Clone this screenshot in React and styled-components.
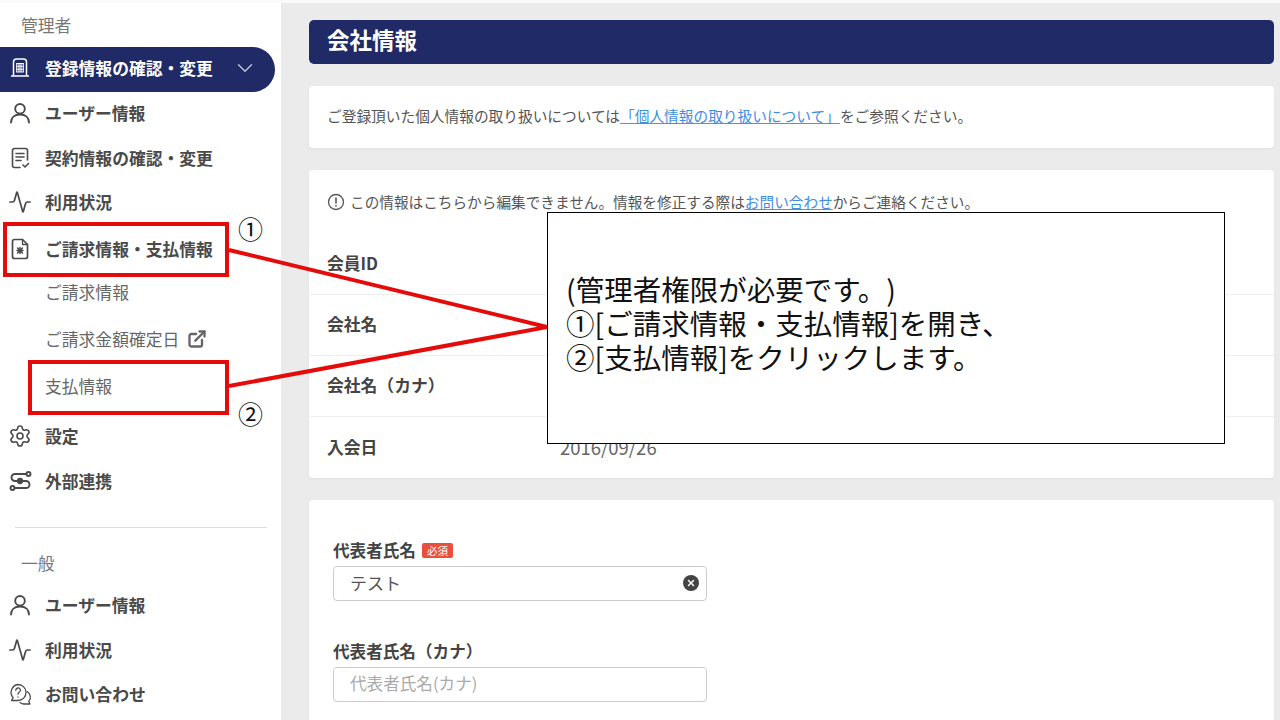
import React from 'react';
import styled, { createGlobalStyle } from 'styled-components';
import { Activity, Settings, ExternalLink, ChevronDown, X } from 'lucide-react';

const GlobalStyle = createGlobalStyle`
	html, body {
		margin: 0;
		height: 100%;
		overflow: hidden;
	}
	body {
		background: #ebebeb;
		font-family: "Noto Sans CJK JP", "Noto Sans", sans-serif;
		color: #444;
	}
`;

const Page = styled.div`
	position: relative;
	width: 1280px;
	height: 720px;
	overflow: hidden;
	display: flex;
	background: #ebebeb;
	border-top: 3px solid #fafafa;
	box-sizing: border-box;
`;

const Sidebar = styled.nav`
	width: 281px;
	flex: none;
	background: #fff;
	display: flex;
	flex-direction: column;
`;

const SectionTitle = styled.div`
	height: ${p => p.$height}px;
	flex: none;
	box-sizing: border-box;
	padding: ${p => p.$top || 0}px 0 0 21px;
	display: flex;
	align-items: center;
	font-size: 16.8px;
	color: #777;
`;

const NavItem = styled.div`
	height: 44.5px;
	flex: none;
	box-sizing: border-box;
	display: flex;
	align-items: center;
	gap: 13px;
	padding: 0 0 2px 8px;
	margin-top: ${p => p.$top || 0}px;
	font-size: 16.8px;
	font-weight: 700;
	color: #4a4a4a;
	white-space: nowrap;

	& svg {
		flex: none;
	}
`;

const ActiveItem = styled(NavItem)`
	height: 45px;
	margin-right: 6px;
	padding: 0 17px 3px 8px;
	background: #1f2a66;
	border-radius: 0 23px 23px 0;
	color: #fff;

	& .chevron {
		margin-left: auto;
		color: #c8cbdc;
	}
`;

const SubItem = styled.div`
	height: 47px;
	flex: none;
	box-sizing: border-box;
	display: flex;
	align-items: center;
	gap: 8px;
	padding: 0 0 3px 45px;
	font-size: 16.8px;
	color: #666;
	margin-top: ${p => p.$top || 0}px;
`;

const SideDivider = styled.hr`
	flex: none;
	width: 252px;
	margin: 23px 0 0 15px;
	border: 0;
	border-top: 1px solid #ddd;
`;

const Main = styled.main`
	flex: 1;
	min-width: 0;
	display: flex;
	flex-direction: column;
	gap: 22px;
	padding: 17px 6px 0 28px;
`;

const PageTitle = styled.h1`
	margin: 0;
	height: 44px;
	flex: none;
	box-sizing: border-box;
	padding: 0 0 7px 18px;
	display: flex;
	align-items: center;
	background: #1f2a66;
	border-radius: 5px;
	color: #fff;
	font-size: 22.5px;
	font-weight: 700;
`;

const Card = styled.section`
	flex: none;
	background: #fff;
	border-radius: 4px;
	box-shadow: 0 1px 3px rgba(0, 0, 0, 0.05);
`;

const NoticeCard = styled(Card)`
	height: 62px;
	box-sizing: border-box;
	padding: 0 0 4px 18px;
	display: flex;
	align-items: center;
	font-size: 14.7px;
	color: #555;
	white-space: nowrap;
`;

const TextLink = styled.a`
	color: #3f8fe0;
	text-decoration: underline;
	text-decoration-color: #35a5c9;
`;

const InfoNote = styled.div`
	height: 64px;
	box-sizing: border-box;
	padding: 0 0 1px 18px;
	display: flex;
	align-items: center;
	gap: 5px;
	font-size: 14.65px;
	color: #555;
	white-space: nowrap;
`;

const InfoRow = styled.div`
	height: 61px;
	box-sizing: border-box;
	padding: 0 0 2px 18px;
	display: grid;
	grid-template-columns: 233px 1fr;
	align-items: center;
	font-size: 16.8px;
	font-weight: 700;
	color: #444;
	border-bottom: ${p => (p.$last ? 'none' : '1px solid #eee')};

	& span {
		font-weight: 400;
		font-size: 18.5px;
		color: #666;
	}
`;

const FormCard = styled(Card)`
	padding: 39px 24px 0;
	height: 300px;
	border-radius: 4px 4px 0 0;
`;

const Field = styled.div`
	margin-bottom: 39px;
`;

const FieldLabel = styled.label`
	height: 22px;
	display: flex;
	align-items: center;
	gap: 6px;
	margin-bottom: 5px;
	font-size: 16.6px;
	font-weight: 700;
	color: #444;
`;

const RequiredBadge = styled.span`
	padding: 0 5px;
	height: 15px;
	line-height: 15px;
	background: #e8503a;
	border-radius: 2px;
	color: #fff;
	font-size: 10.5px;
	font-weight: 400;
`;

const InputBox = styled.div`
	position: relative;
	width: 374px;
	height: 35px;
	box-sizing: border-box;
	padding: 0 0 3px 16px;
	display: flex;
	align-items: center;
	border: 1px solid #ccc;
	border-radius: 4px;
	font-size: ${p => (p.$placeholder ? 16.6 : 17)}px;
	color: ${p => (p.$placeholder ? '#aaa' : '#555')};
`;

const ClearButton = styled.span`
	position: absolute;
	right: 7px;
	top: 8px;
	width: 16px;
	height: 16px;
	border-radius: 50%;
	background: #444;
	color: #fff;
	display: flex;
	align-items: center;
	justify-content: center;
`;

const HighlightBox = styled.div`
	position: absolute;
	left: ${p => p.$x}px;
	top: ${p => p.$y}px;
	width: ${p => p.$w}px;
	height: ${p => p.$h}px;
	box-sizing: border-box;
	border: 4px solid #e60b0b;
`;

const Leaders = styled.svg`
	position: absolute;
	left: 0;
	top: -3px;
	width: 1280px;
	height: 720px;
	pointer-events: none;
`;

const StepMark = styled.div`
	position: absolute;
	left: 238px;
	top: ${p => p.$y}px;
	font-size: 25px;
	line-height: 28px;
	color: #111;
`;

const Callout = styled.div`
	position: absolute;
	left: 547px;
	top: 209px;
	width: 678px;
	height: 232px;
	box-sizing: border-box;
	padding: 0 0 11px 18px;
	display: flex;
	flex-direction: column;
	justify-content: center;
	background: #fff;
	border: 1px solid #000;
	font-size: 28.5px;
	line-height: 34px;
	text-spacing-trim: space-all;
	color: #111;
	white-space: nowrap;
`;

const BuildingIcon = () => (
	<svg width="24" height="24" viewBox="0 0 24 24" fill="none" stroke="currentColor" strokeWidth="1.5">
		<path d="M5.5 20V6a3 3 0 0 1 3-3h7a3 3 0 0 1 3 3v14M3 20h18" />
		<path d="M8.7 7.5h6.6v8.5H8.7zM11 7.5V16M13 7.5V16M8.7 10.3h6.6M8.7 13.2h6.6" strokeWidth="1.1" />
	</svg>
);

const UserIcon = () => (
	<svg width="24" height="24" viewBox="0 0 24 24" fill="none" stroke="currentColor" strokeWidth="1.9" strokeLinecap="round">
		<circle cx="12" cy="7.8" r="4.8" />
		<path d="M3 21.5c0-5 3.5-8 9-8s9 3 9 8" />
	</svg>
);

const ContractIcon = () => (
	<svg width="24" height="24" viewBox="0 0 24 24" fill="none" stroke="currentColor" strokeWidth="1.6" strokeLinecap="round" strokeLinejoin="round">
		<path d="M12 21.5H6.5a2 2 0 0 1-2-2v-15a2 2 0 0 1 2-2h11a2 2 0 0 1 2 2V14" />
		<path d="M8 7.5h8M8 11h8M8 14.5h5M15 19l2 2 3.5-3.5" />
	</svg>
);

const BillingIcon = () => (
	<svg width="24" height="24" viewBox="0 0 24 24" fill="none" stroke="currentColor" strokeWidth="1.7" strokeLinejoin="round" strokeLinecap="round">
		<path d="M6.5 2.5h8l5 5v12a2 2 0 0 1-2 2h-11a2 2 0 0 1-2-2v-15a2 2 0 0 1 2-2z" />
		<path d="M14.5 2.5v5h5" strokeWidth="1.3" />
		<path d="M9.5 11l5 5M14.5 11l-5 5M12 10.5v6M9 13.5h6" strokeWidth="1.5" />
	</svg>
);

const LinkAppsIcon = () => (
	<svg width="24" height="24" viewBox="0 0 24 24" fill="none" stroke="currentColor" strokeWidth="1.9" strokeLinecap="round">
		<path d="M18 5H7a3.5 3.5 0 0 0 0 7h11a3.5 3.5 0 0 1 0 7H7" />
		<circle cx="20.5" cy="5" r="2" />
		<circle cx="12" cy="12" r="2.2" fill="currentColor" />
		<circle cx="4.5" cy="19" r="2" />
	</svg>
);

const HelpIcon = () => (
	<svg width="24" height="24" viewBox="0 0 24 24" fill="none" stroke="currentColor" strokeWidth="1.3" strokeLinecap="round" strokeLinejoin="round">
		<path d="M10 2.5a8 8 0 0 1 0 16H3.5l1.6-2.8A8 8 0 0 1 10 2.5z" />
		<path d="M19 9.5a6.5 6.5 0 0 1 1.8 10l1.2 2.5h-6.5a6 6 0 0 1-3.5-1.4" />
		<path d="M7.8 8.3a2.3 2.3 0 1 1 3.4 2c-.8.5-1.2.9-1.2 1.9M10 14.8v.2" />
	</svg>
);

const InfoIcon = () => (
	<svg width="18" height="18" viewBox="0 0 18 18" fill="none" stroke="#555" strokeWidth="1.3" strokeLinecap="round">
		<circle cx="9" cy="9" r="7.5" />
		<path d="M9 5v5M9 12.6v.3" strokeWidth="1.6" />
	</svg>
);

const ActivityIcon = () => <Activity size={24} strokeWidth={1.7} />;
const GearIcon = () => <Settings size={24} strokeWidth={1.6} />;

export default function App() {
	return (
		<>
			<GlobalStyle />
			<Page>
				<Sidebar>
					<SectionTitle $height={44}>管理者</SectionTitle>
					<ActiveItem>
						<BuildingIcon />
						登録情報の確認・変更
						<ChevronDown className="chevron" size={26} strokeWidth={1.2} />
					</ActiveItem>
					<NavItem><UserIcon />ユーザー情報</NavItem>
					<NavItem><ContractIcon />契約情報の確認・変更</NavItem>
					<NavItem><ActivityIcon />利用状況</NavItem>
					<NavItem $top={2}><BillingIcon />ご請求情報・支払情報</NavItem>
					<SubItem $top={-2}>ご請求情報</SubItem>
					<SubItem>ご請求金額確定日<ExternalLink size={20} strokeWidth={2.8} /></SubItem>
					<SubItem>支払情報</SubItem>
					<NavItem $top={4}><GearIcon />設定</NavItem>
					<NavItem><LinkAppsIcon />外部連携</NavItem>
					<SideDivider />
					<SectionTitle $height={56} $top={13}>一般</SectionTitle>
					<NavItem><UserIcon />ユーザー情報</NavItem>
					<NavItem><ActivityIcon />利用状況</NavItem>
					<NavItem><HelpIcon />お問い合わせ</NavItem>
				</Sidebar>

				<Main>
					<PageTitle>会社情報</PageTitle>
					<NoticeCard>
						ご登録頂いた個人情報の取り扱いについては<TextLink>「個人情報の取り扱いについて」</TextLink>をご参照ください。
					</NoticeCard>
					<Card>
						<InfoNote>
							<InfoIcon />
							<div>この情報はこちらから編集できません。情報を修正する際は<TextLink>お問い合わせ</TextLink>からご連絡ください。</div>
						</InfoNote>
						<InfoRow>会員ID</InfoRow>
						<InfoRow>会社名</InfoRow>
						<InfoRow>会社名（カナ）</InfoRow>
						<InfoRow $last>入会日<span>2016/09/26</span></InfoRow>
					</Card>
					<FormCard>
						<Field>
							<FieldLabel>代表者氏名<RequiredBadge>必須</RequiredBadge></FieldLabel>
							<InputBox>
								テスト
								<ClearButton><X size={10} strokeWidth={3.5} /></ClearButton>
							</InputBox>
						</Field>
						<Field>
							<FieldLabel>代表者氏名（カナ）</FieldLabel>
							<InputBox $placeholder>代表者氏名(カナ)</InputBox>
						</Field>
					</FormCard>
				</Main>

				<HighlightBox $x={3} $y={219} $w={226} $h={55} />
				<HighlightBox $x={28} $y={357} $w={201} $h={55} />
				<Leaders viewBox="0 0 1280 720">
					<path d="M229 250L547 327L229 386" fill="none" stroke="#e60b0b" strokeWidth="4" />
				</Leaders>
				<StepMark $y={211}>①</StepMark>
				<StepMark $y={396}>②</StepMark>
				<Callout>
					<div>(管理者権限が必要です。)</div>
					<div>①[ご請求情報・支払情報]を開き、</div>
					<div>②[支払情報]をクリックします。</div>
				</Callout>
			</Page>
		</>
	);
}
